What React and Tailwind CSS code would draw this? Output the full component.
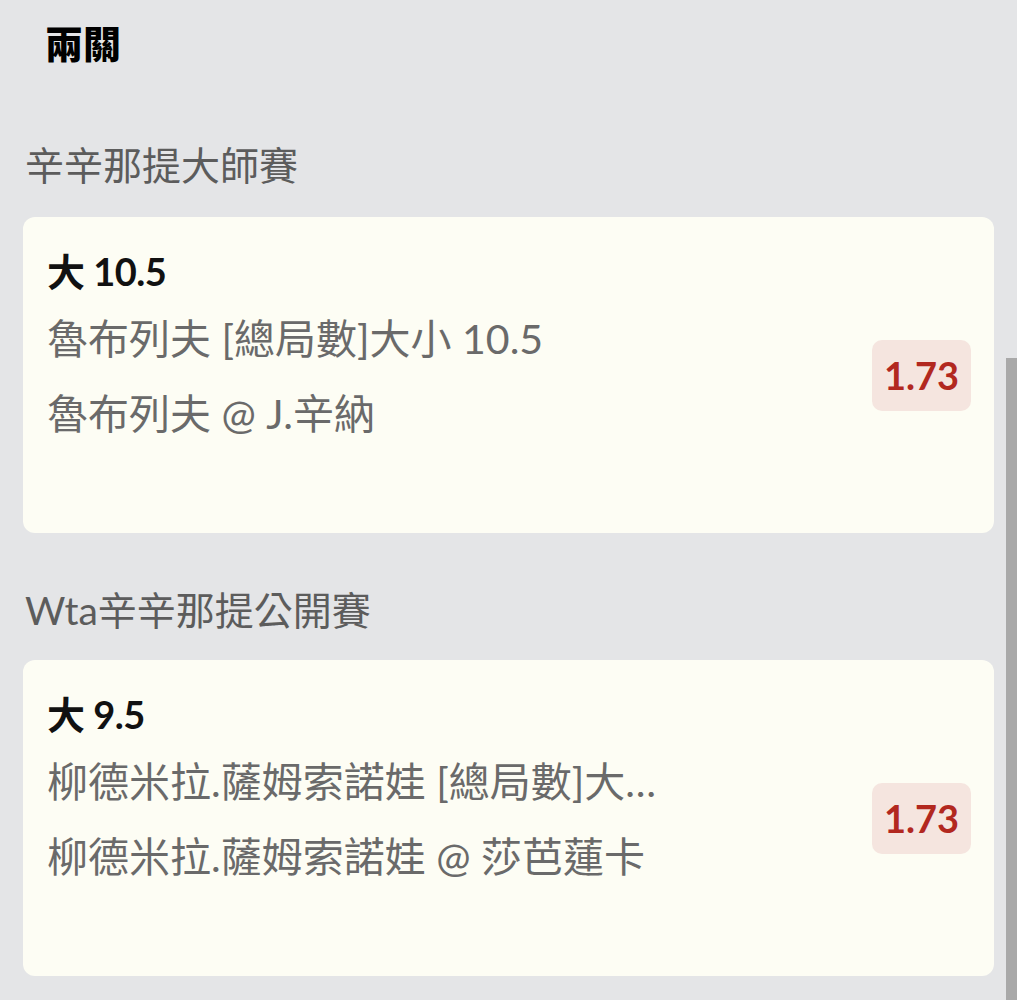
import React from 'react';

const bets = [
    {
        league: '辛辛那提大師賽',
        pick: '大 10.5',
        market: '魯布列夫 [總局數]大小 10.5',
        match: '魯布列夫 @ J.辛納',
        odds: '1.73',
    },
    {
        league: 'Wta辛辛那提公開賽',
        pick: '大 9.5',
        market: '柳德米拉.薩姆索諾娃 [總局數]大小 9.5',
        match: '柳德米拉.薩姆索諾娃 @ 莎芭蓮卡',
        odds: '1.73',
    },
];

const font = "font-['Lato','Noto_Sans_CJK_TC',sans-serif]";

const BetCard = ({ bet }) => (
    <div className="flex items-center justify-between h-[316px] rounded-[12px] bg-[#fdfdf4] pl-[24px] pr-[23px]">
        <div className="self-start pt-[30px] w-[626px]">
            <div className="text-[38px] leading-[48px] font-bold text-[#111111] tracking-[-0.5px]">{bet.pick}</div>
            <div className="mt-[20px] text-[41px] leading-[48px] text-[#6a6a6a] truncate">{bet.market}</div>
            <div className="mt-[27px] text-[41px] leading-[48px] text-[#6a6a6a] truncate">{bet.match}</div>
        </div>
        <div className="flex items-center justify-center w-[99px] h-[71px] rounded-[10px] bg-[#f5e5df] text-[38px] font-bold text-[#b2281f]">
            {bet.odds}
        </div>
    </div>
);

export default function App() {
    return (
        <div className={`relative h-[1000px] w-full overflow-hidden bg-[#e4e5e7] px-[23px] ${font}`}>
            {/* page title */}
            <div className="mt-[19px] ml-[22px] text-[38px] leading-[48px] font-black text-black">兩關</div>

            {bets.map((bet, i) => (
                <div key={i} className={i === 0 ? 'mt-[74px]' : 'mt-[53px]'}>
                    <div className="ml-[2px] text-[39px] leading-[48px] text-[#5c5c5c]">{bet.league}</div>
                    <div className={i === 0 ? 'mt-[28px]' : 'mt-[26px]'}>
                        <BetCard bet={bet} />
                    </div>
                </div>
            ))}

            {/* scrollbar thumb */}
            <div className="absolute right-0 top-[358px] bottom-0 w-[11px] bg-[#a9a9a9]" />
        </div>
    );
}
